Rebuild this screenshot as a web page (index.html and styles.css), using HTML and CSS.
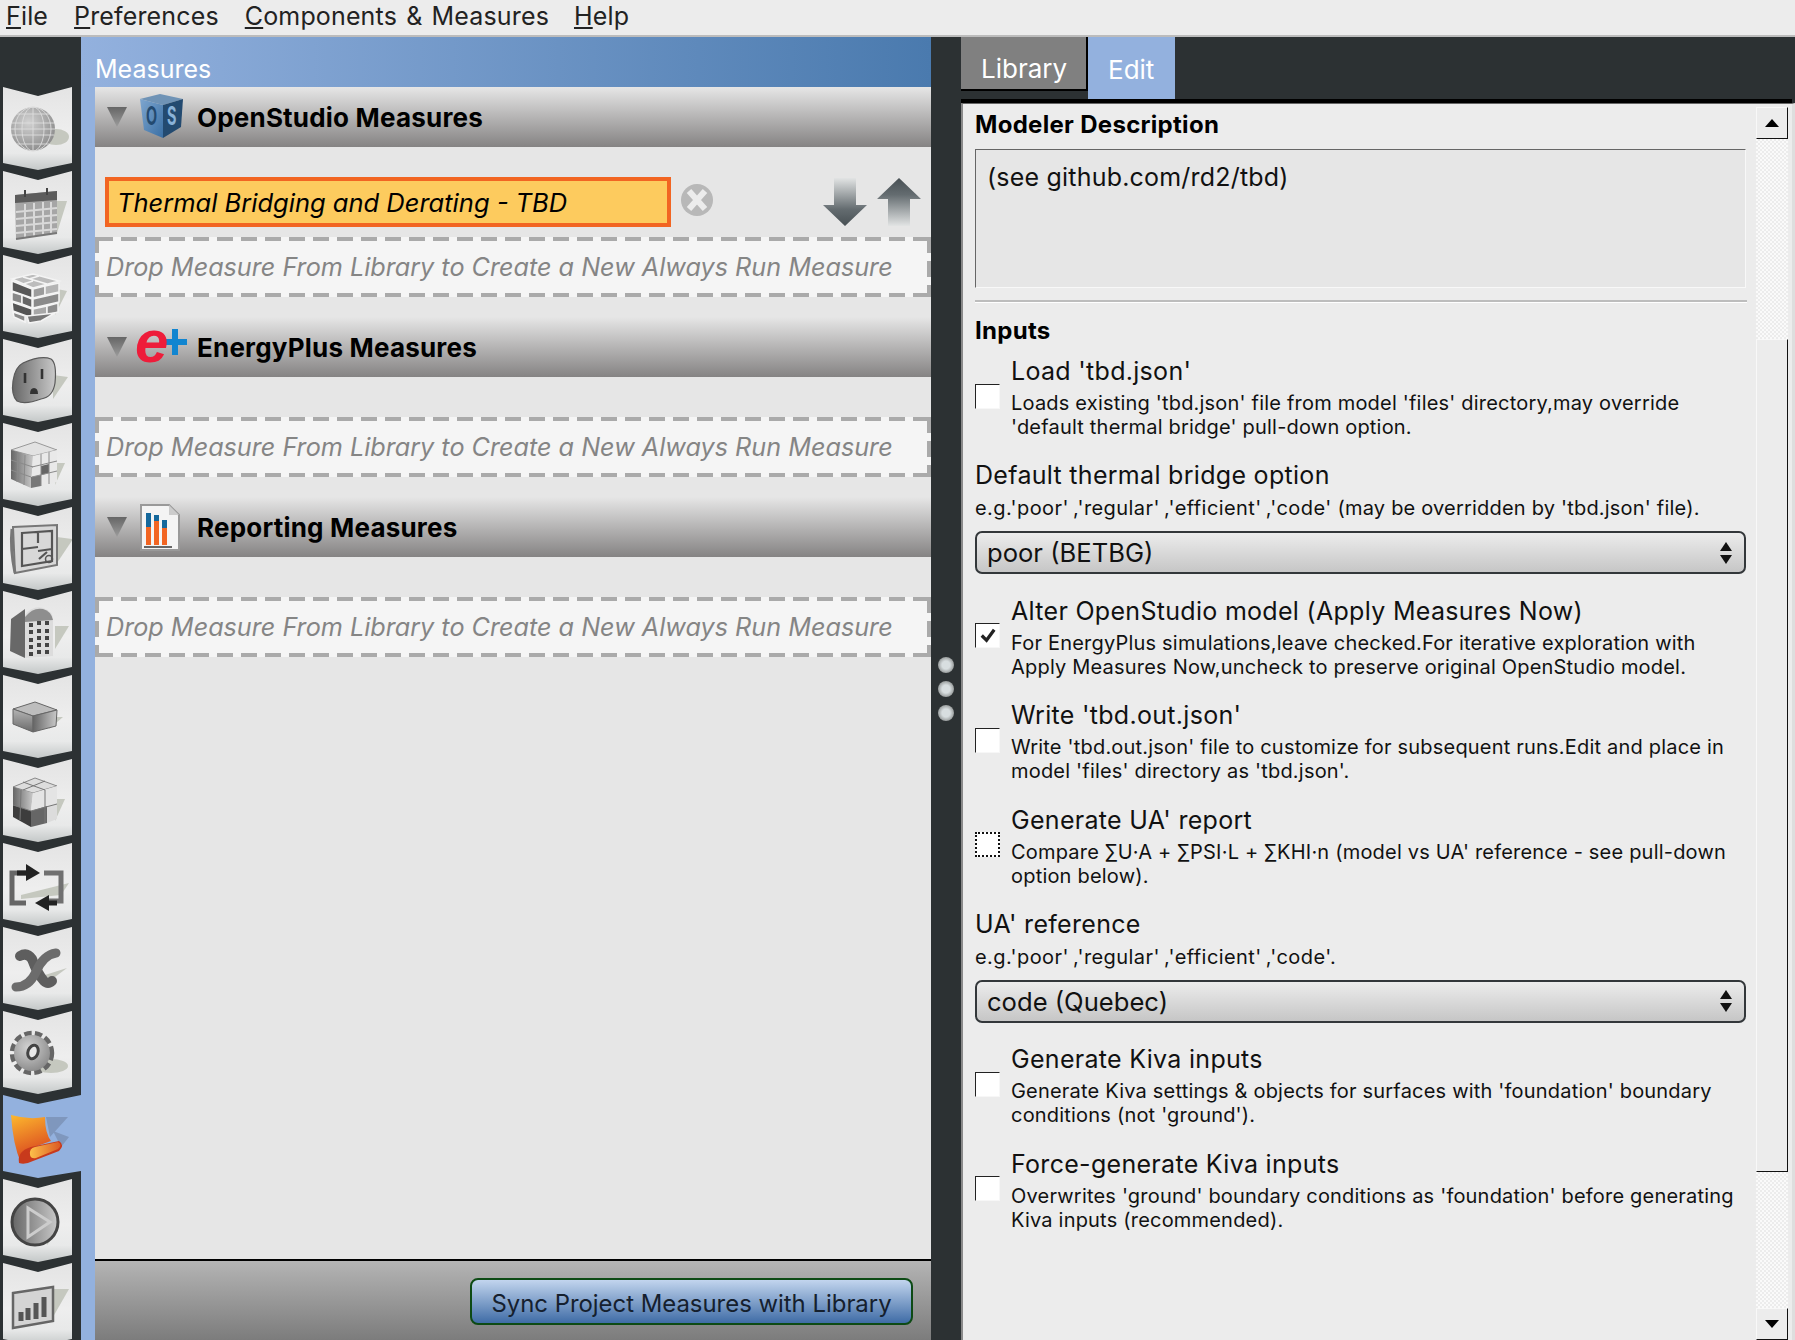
FILE: index.html
```html
<!DOCTYPE html>
<html lang="en">
<head>
    <meta charset="UTF-8">
    <title>OpenStudio Measures</title>
    <link rel="stylesheet" href="styles.css">
</head>
<body>
    <svg class="defs" width="0" height="0">
        <defs>
            <linearGradient id="gv" x1="0" y1="0" x2="0" y2="1"><stop offset="0" stop-color="#b5b5b5"/><stop offset="1" stop-color="#6b6b6b"/></linearGradient>
            <linearGradient id="gcaret" x1="0" y1="0" x2="0" y2="1"><stop offset="0" stop-color="#666"/><stop offset="1" stop-color="#9c9c9c"/></linearGradient>
            <linearGradient id="gh" x1="0" y1="0" x2="1" y2="0"><stop offset="0" stop-color="#666"/><stop offset="1" stop-color="#c9c9c9"/></linearGradient>
            <radialGradient id="gr" cx=".4" cy=".35" r=".75"><stop offset="0" stop-color="#d2d2d2"/><stop offset="1" stop-color="#858585"/></radialGradient>
            <linearGradient id="gorange" x1="0" y1="0" x2=".3" y2="1"><stop offset="0" stop-color="#fdb92e"/><stop offset="1" stop-color="#d8431f"/></linearGradient>
            <linearGradient id="groll" x1="0" y1="0" x2="1" y2="0"><stop offset="0" stop-color="#fcc04a"/><stop offset="1" stop-color="#dc5a24"/></linearGradient>
            <linearGradient id="gdown" x1="0" y1="0" x2="0" y2="1"><stop offset="0" stop-color="#e2e4e4"/><stop offset=".65" stop-color="#646c70"/><stop offset="1" stop-color="#485054"/></linearGradient>
            <linearGradient id="gup" x1="0" y1="1" x2="0" y2="0"><stop offset="0" stop-color="#e2e4e4"/><stop offset=".65" stop-color="#646c70"/><stop offset="1" stop-color="#485054"/></linearGradient>
            <linearGradient id="gcube" x1="0" y1="0" x2="1" y2="1"><stop offset="0" stop-color="#7ea6cf"/><stop offset="1" stop-color="#3a6fa4"/></linearGradient>
        </defs>
    </svg>

    <div class="menubar">
        <span class="menu-item m-file"><u>F</u>ile</span>
        <span class="menu-item m-prefs"><u>P</u>references</span>
        <span class="menu-item m-comp"><u>C</u>omponents &amp; Measures</span>
        <span class="menu-item m-help"><u>H</u>elp</span>
    </div>

    <div class="app">
        <div class="nav">
            <div class="nav-tab">
                <svg viewBox="0 0 69 83"><ellipse cx="53" cy="50" rx="13" ry="8" fill="#c5c8bf"/><circle cx="30" cy="42" r="22" fill="url(#gr)"/><g fill="none" stroke="#dedede" stroke-width=".9"><ellipse cx="30" cy="42" rx="11" ry="22"/><ellipse cx="30" cy="42" rx="18" ry="22"/><path d="M30 20v44M9 36h42M9 48h42M14 27h32M14 57h32M8 42h44"/></g></svg>
            </div>
            <div class="nav-tab">
                <svg viewBox="0 0 69 83"><polygon points="54,30 64,30 54,62" fill="#c5c8bf"/><polygon points="12,24 54,20 54,62 13,68" fill="#a6a6a6"/><polygon points="12,24 54,20 54,29 12,32" fill="#5c5c5c"/><g stroke="#d9d9d9" stroke-width="2"><path d="M13 41l41-4M13 48l41-4M13 55l41-4M13 62l41-4M22 33v34M31 32v34M40 31v33M48 31v32"/></g><path d="M22 19v7M44 17v7" stroke="#444" stroke-width="2"/><path d="M13 68l41-6" stroke="#777" stroke-width="2"/></svg>
            </div>
            <div class="nav-tab">
                <svg viewBox="0 0 69 83"><polygon points="54,34 64,36 52,60" fill="#c5c8bf"/><g stroke="#f4f4f4" stroke-width="1.5"><polygon points="9,24 30,19 56,26 30,33" fill="#bcbcbc"/><path d="M20 22l24 7M30 26l-10 3M36 21l-10 3" fill="none"/><polygon points="9,26 29,34 29,43 9,36" fill="#585858"/><polygon points="9,37 19,40 19,49 9,46" fill="#888"/><polygon points="19,40 29,44 29,53 19,49" fill="#666"/><polygon points="9,47 29,54 29,63 10,56" fill="#555"/><polygon points="10,57 22,61 22,67 11,62" fill="#8a8a8a"/><polygon points="30,34 42,31 42,40 30,43" fill="#9c9c9c"/><polygon points="42,31 56,28 56,37 42,40" fill="#b4b4b4"/><polygon points="30,44 56,38 56,47 30,53" fill="#8a8a8a"/><polygon points="30,54 44,51 44,60 30,63" fill="#a8a8a8"/><polygon points="44,51 55,48 55,57 44,60" fill="#8c8c8c"/><polygon points="24,61 52,58 38,66 26,68" fill="#777"/></g></svg>
            </div>
            <div class="nav-tab">
                <svg viewBox="0 0 69 83"><polygon points="50,36 65,38 50,60" fill="#c5c8bf"/><path d="M20 24 Q38 16 48 20 Q54 24 52 44 Q50 58 38 60 Q22 66 14 62 Q8 56 10 42 Q12 28 20 24Z" fill="url(#gh)" stroke="#5a5a5a" stroke-width="1.2"/><path d="M22 34v10M39 30v10" stroke="#333" stroke-width="2.6"/><path d="M27 55q0-6 4-6t4 6z" fill="#333"/></svg>
            </div>
            <div class="nav-tab">
                <svg viewBox="0 0 69 83"><polygon points="54,40 62,40 52,62" fill="#c5c8bf"/><polygon points="8,27 32,19 54,27 30,33" fill="#e2e2e2" stroke="#999"/><polygon points="8,27 30,33 28,65 8,56" fill="url(#gh)"/><polygon points="30,33 54,27 54,59 28,65" fill="#e9e9e9"/><polygon points="38,43 46,41 46,50 38,52" fill="#666"/><polygon points="28,54 38,52 38,63 28,65" fill="#777"/><g fill="none" stroke="#8a8a8a"><path d="M15 30l-1 29M22 32l-1 30M8 37l22 7M8 47l20 7M38 31v32M46 29v32M29 44l25-6M29 54l25-6"/></g></svg>
            </div>
            <div class="nav-tab">
                <svg viewBox="0 0 69 83"><polygon points="54,30 70,32 54,56" fill="#c5c8bf"/><polygon points="10,20 54,18 54,58 12,66" fill="#d8d8d8" stroke="#777" stroke-width="2"/><path d="M9 22q-2 20 3 44" fill="none" stroke="#777" stroke-width="3"/><path d="M19 26l30-2v30l-30 5zM19 42l16-2M35 26v10M35 44l14-2M36 52l8-7" fill="none" stroke="#555" stroke-width="2.2"/><circle cx="46" cy="52" r="3.5" fill="none" stroke="#555" stroke-width="1.5"/></svg>
            </div>
            <div class="nav-tab">
                <svg viewBox="0 0 69 83"><polygon points="52,35 66,35 52,58" fill="#c5c8bf"/><polygon points="8,28 22,18 22,67 7,60" fill="#686868"/><path d="M22 67V24q8-10 18-7 10 3 10 12v36z" fill="#dcdcdc"/><path d="M22 26q8-10 18-8 8 2 10 11l-28 2z" fill="#8e8e8e"/><g fill="#444"><rect x="26" y="32" width="4" height="4"/><rect x="34" y="30" width="4" height="4"/><rect x="42" y="30" width="4" height="4"/><rect x="26" y="39" width="4" height="4"/><rect x="34" y="38" width="4" height="4"/><rect x="42" y="38" width="4" height="4"/><rect x="26" y="47" width="4" height="4"/><rect x="34" y="45" width="4" height="4"/><rect x="42" y="45" width="4" height="4"/><rect x="26" y="54" width="4" height="4"/><rect x="34" y="52" width="4" height="4"/><rect x="42" y="52" width="4" height="4"/><rect x="26" y="61" width="4" height="4"/><rect x="34" y="59" width="4" height="4"/><rect x="42" y="59" width="4" height="4"/></g></svg>
            </div>
            <div class="nav-tab">
                <svg viewBox="0 0 69 83"><polygon points="50,42 60,42 46,54" fill="#c5c8bf"/><polygon points="10,34 32,27 54,35 30,41" fill="#bdbdbd" stroke="#666"/><polygon points="10,34 30,41 30,57 10,49" fill="url(#gv)" stroke="#666"/><polygon points="30,41 54,35 53,51 30,57" fill="url(#gh)" stroke="#666"/></svg>
            </div>
            <div class="nav-tab">
                <svg viewBox="0 0 69 83"><polygon points="52,40 62,40 52,62" fill="#c5c8bf"/><polygon points="10,28 32,19 54,27 30,34" fill="#ddd" stroke="#888"/><polygon points="10,28 30,34 28,52 10,46" fill="url(#gh)"/><polygon points="30,34 54,27 54,45 28,52" fill="#e4e4e4"/><polygon points="10,46 28,52 28,68 10,58" fill="#3d3d3d"/><polygon points="28,52 44,47 44,64 28,68" fill="#666"/><polygon points="44,47 54,45 54,60 44,64" fill="#dcdcdc"/><g fill="none" stroke="#777"><path d="M20 23l22 8M42 22L20 31M18 31l-1 30M42 31v33M10 46l18 6 26-7"/></g></svg>
            </div>
            <div class="nav-tab">
                <svg viewBox="0 0 69 83"><polygon points="18,52 66,40 58,52 18,56" fill="#c5c8bf"/><path d="M28 30H9v30h14" fill="none" stroke="#666" stroke-width="5"/><path d="M41 30h17v28H42" fill="none" stroke="#707070" stroke-width="5"/><polygon points="23,21 37,30 23,38" fill="#222"/><path d="M14 30h12" stroke="#222" stroke-width="5"/><polygon points="32,60 46,52 46,68" fill="#222"/><path d="M44 60h10" stroke="#222" stroke-width="5"/></svg>
            </div>
            <div class="nav-tab">
                <svg viewBox="0 0 69 83"><path d="M42 48l22-7-16 12z" fill="#c5c8bf"/><path d="M17 29q7-4 12 3 5 14 12 22 4 4 8 0" fill="none" stroke="#5e5e5e" stroke-width="10" stroke-linecap="round"/><path d="M13 60q13 0 20-15 7-17 20-19" fill="none" stroke="#6c6c6c" stroke-width="9" stroke-linecap="round"/></svg>
            </div>
            <div class="nav-tab">
                <svg viewBox="0 0 69 83"><ellipse cx="48" cy="55" rx="17" ry="7" fill="#c5c8bf"/><circle cx="29" cy="42" r="19" fill="none" stroke="#666" stroke-width="6.5" stroke-dasharray="7 3.2"/><circle cx="29" cy="42" r="18" fill="url(#gr)"/><ellipse cx="30" cy="41" rx="5" ry="7" transform="rotate(20 30 41)" fill="#e8e8e8" stroke="#444" stroke-width="3"/></svg>
            </div>
            <div class="nav-tab active">
                <svg viewBox="0 0 78 83"><path d="M43 22h22L47 42zM50 36l16 6-8 10z" fill="#7f97bd"/><path d="M8 20Q26 25 42 22Q42 38 48 46L26 54Q18 58 18 68Q10 50 8 20Z" fill="url(#gorange)"/><path d="M16 68Q14 56 28 52L56 46Q62 50 56 56L30 66Q22 70 16 68Z" fill="#c83a1c"/><path d="M27 60Q26 53 32 52L55 47Q60 50 55 54L33 63Q28 64 27 60Z" fill="url(#groll)"/></svg>
            </div>
            <div class="nav-tab">
                <svg viewBox="0 0 69 83"><path d="M40 20 Q66 40 44 66" fill="#bfc3b9"/><circle cx="32" cy="43" r="23" fill="url(#gh)" stroke="#444" stroke-width="3"/><polygon points="25,29 47,43 25,58" fill="none" stroke="#ccc" stroke-width="3"/></svg>
            </div>
            <div class="nav-tab">
                <svg viewBox="0 0 69 83"><polygon points="50,26 66,26 50,54" fill="#c5c8bf"/><polygon points="10,30 50,24 50,58 10,65" fill="#d4d4d4" stroke="#666" stroke-width="2.5"/><path d="M18 58v-9M25 57V45M33 56V40M41 54V34" stroke="#555" stroke-width="5"/></svg>
            </div>
        </div>

        <div class="measures">
            <div class="measures-title">Measures</div>
            <div class="measures-body">
                <div class="section-head">
                    <svg class="caret" viewBox="0 0 20 20"><polygon points="0,0 20,0 10,20" fill="url(#gcaret)"/></svg>
                    <svg class="section-icon" viewBox="0 0 52 46"><polygon points="5,5 25,0 48,5 28,11" fill="#6f93b6"/><polygon points="5,5 28,11 28,44 9,36" fill="url(#gcube)"/><polygon points="28,11 48,5 46,33 28,44" fill="#234a70"/><text transform="translate(11 31) scale(.72 1.25)" class="cube-letter" fill="#234a70">O</text><text transform="translate(32 31) scale(.72 1.25)" class="cube-letter" fill="#8ab2d8">S</text></svg>
                    <span class="section-name">OpenStudio Measures</span>
                </div>
                <div class="section-list">
                    <div class="measure-row">
                        <div class="measure-item">Thermal Bridging and Derating - TBD</div>
                        <svg class="remove-icon" viewBox="0 0 32 32"><circle cx="16" cy="16" r="16" fill="#b8b8b8"/><path d="M8 7l16 18M24 7L8 25" stroke="#ececec" stroke-width="6"/></svg>
                        <div class="move-icons">
                            <svg class="arrow" viewBox="0 0 44 48"><polygon points="11,0 33,0 33,27 44,27 22,48 0,27 11,27" fill="url(#gdown)"/></svg>
                            <svg class="arrow" viewBox="0 0 44 48"><polygon points="11,48 33,48 33,21 44,21 22,0 0,21 11,21" fill="url(#gup)"/></svg>
                        </div>
                    </div>
                    <div class="drop-zone">Drop Measure From Library to Create a New Always Run Measure</div>
                </div>

                <div class="section-head">
                    <svg class="caret" viewBox="0 0 20 20"><polygon points="0,0 20,0 10,20" fill="url(#gcaret)"/></svg>
                    <svg class="section-icon" viewBox="0 0 52 46"><path d="M31 15h6V5h6v10h9v6h-9v10h-6V21h-6z" fill="#1185d0"/><text x="0" y="38" class="eplus-e">e</text></svg>
                    <span class="section-name">EnergyPlus Measures</span>
                </div>
                <div class="section-list empty">
                    <div class="drop-zone">Drop Measure From Library to Create a New Always Run Measure</div>
                </div>

                <div class="section-head">
                    <svg class="caret" viewBox="0 0 20 20"><polygon points="0,0 20,0 10,20" fill="url(#gcaret)"/></svg>
                    <svg class="section-icon" viewBox="0 0 52 46"><polygon points="6,1 34,1 44,11 44,46 6,46" fill="#f4f4f4" stroke="#999" stroke-width="2"/><polygon points="34,1 44,11 34,11" fill="#ccc"/><rect x="11" y="9" width="5" height="14" fill="#15689c"/><rect x="11" y="23" width="5" height="18" fill="#f26522"/><rect x="19" y="11" width="5" height="6" fill="#15689c"/><rect x="19" y="17" width="5" height="24" fill="#f26522"/><rect x="27" y="16" width="5" height="8" fill="#15689c"/><rect x="27" y="24" width="5" height="17" fill="#f26522"/><path d="M9 43h28" stroke="#666" stroke-width="2"/></svg>
                    <span class="section-name">Reporting Measures</span>
                </div>
                <div class="section-list empty">
                    <div class="drop-zone">Drop Measure From Library to Create a New Always Run Measure</div>
                </div>

                <div class="sync-bar">
                    <button class="sync-btn">Sync Project Measures with Library</button>
                </div>
            </div>
        </div>

        <div class="splitter">
            <span class="split-dot"></span>
            <span class="split-dot"></span>
            <span class="split-dot"></span>
        </div>

        <div class="side">
            <div class="tabs">
                <div class="tab tab-library">Library</div>
                <div class="tab tab-edit">Edit</div>
            </div>
            <div class="edit-panel">
                <div class="edit-content">
                    <div class="strong-label">Modeler Description</div>
                    <div class="description-box">(see github.com/rd2/tbd)</div>
                    <div class="divider"></div>
                    <div class="strong-label inputs-label">Inputs</div>

                    <div class="check-row first">
                        <span class="checkbox"></span>
                        <div class="check-text">
                            <div class="field-label">Load 'tbd.json'</div>
                            <div class="field-desc">Loads existing 'tbd.json' file from model 'files' directory,may override<br>'default thermal bridge' pull-down option.</div>
                        </div>
                    </div>

                    <div class="choice-field">
                        <div class="field-label">Default thermal bridge option</div>
                        <div class="field-desc"><span class="quoted">e.g.'poor'&thinsp;,'regular'&thinsp;,'efficient'&thinsp;,'code'</span> (may be overridden by 'tbd.json' file).</div>
                        <div class="select-box"><span>poor (BETBG)</span><svg class="select-arrows" viewBox="0 0 12 24"><polygon points="6,1 12,10 0,10" fill="#111"/><polygon points="6,23 12,14 0,14" fill="#111"/></svg></div>
                    </div>

                    <div class="check-row">
                        <span class="checkbox"><svg viewBox="0 0 24 24"><path d="M6 12l5 5 8-11" fill="none" stroke="#222" stroke-width="3.4"/></svg></span>
                        <div class="check-text">
                            <div class="field-label">Alter OpenStudio model (Apply Measures Now)</div>
                            <div class="field-desc">For EnergyPlus simulations,leave checked.For iterative exploration with<br>Apply Measures Now,uncheck to preserve original OpenStudio model.</div>
                        </div>
                    </div>

                    <div class="check-row">
                        <span class="checkbox"></span>
                        <div class="check-text">
                            <div class="field-label">Write 'tbd.out.json'</div>
                            <div class="field-desc">Write 'tbd.out.json' file to customize for subsequent runs.Edit and place in<br>model 'files' directory as 'tbd.json'.</div>
                        </div>
                    </div>

                    <div class="check-row">
                        <span class="checkbox focused"></span>
                        <div class="check-text">
                            <div class="field-label">Generate UA' report</div>
                            <div class="field-desc">Compare ∑U·A + ∑PSI·L + ∑KHI·n (model vs UA' reference - see pull-down<br>option below).</div>
                        </div>
                    </div>

                    <div class="choice-field">
                        <div class="field-label">UA' reference</div>
                        <div class="field-desc"><span class="quoted">e.g.'poor'&thinsp;,'regular'&thinsp;,'efficient'&thinsp;,'code'.</span></div>
                        <div class="select-box"><span>code (Quebec)</span><svg class="select-arrows" viewBox="0 0 12 24"><polygon points="6,1 12,10 0,10" fill="#111"/><polygon points="6,23 12,14 0,14" fill="#111"/></svg></div>
                    </div>

                    <div class="check-row">
                        <span class="checkbox"></span>
                        <div class="check-text">
                            <div class="field-label">Generate Kiva inputs</div>
                            <div class="field-desc">Generate Kiva settings &amp; objects for surfaces with 'foundation' boundary<br>conditions (not 'ground').</div>
                        </div>
                    </div>

                    <div class="check-row">
                        <span class="checkbox"></span>
                        <div class="check-text">
                            <div class="field-label">Force-generate Kiva inputs</div>
                            <div class="field-desc">Overwrites 'ground' boundary conditions as 'foundation' before generating<br>Kiva inputs (recommended).</div>
                        </div>
                    </div>
                </div>

                <div class="scrollbar">
                    <div class="scroll-btn"><svg viewBox="0 0 14 8"><polygon points="7,0 14,8 0,8" fill="#000"/></svg></div>
                    <div class="scroll-track top"></div>
                    <div class="scroll-thumb"></div>
                    <div class="scroll-track"></div>
                    <div class="scroll-btn"><svg viewBox="0 0 14 8"><polygon points="0,0 14,0 7,8" fill="#000"/></svg></div>
                </div>
            </div>
        </div>
    </div>
</body>
</html>
```

FILE: styles.css
```css
html, body {
    height: 100%;
    overflow: hidden;
}
body {
    margin: 0;
    font-family: 'Inter', 'Liberation Sans', sans-serif;
    background: #2c3133;
    color: #111;
    display: flex;
    flex-direction: column;
}
.defs {
    display: block;
    flex: none;
}
.menubar {
    height: 35px;
    flex: none;
    display: flex;
    background: #ececec;
    border-bottom: 2px solid #bcbcbc;
    font-size: 25px;
    line-height: 33px;
    letter-spacing: .15px;
    word-spacing: 2px;
    color: #222;
}
.menu-item {
    margin-left: 6px;
}
.m-prefs {
    margin-left: 26px;
}
.m-comp {
    margin-left: 26px;
}
.m-help {
    margin-left: 25px;
}
.app {
    flex: 1;
    display: flex;
    min-height: 0;
}

/* left navigation */
.nav {
    width: 81px;
    flex: none;
    padding-top: 50px;
    display: flex;
    flex-direction: column;
    gap: 1px;
    overflow: hidden;
}
.nav-tab {
    width: 69px;
    height: 83px;
    flex: none;
    margin-left: 3px;
    background: linear-gradient(#e4e4e4, #eeeeee 55%, #e8e9e9 80%, #c4c8c8);
    clip-path: polygon(0 0, 35px 9px, 100% 0, 100% 76px, 35px 83px, 0 76px);
}
.nav-tab svg {
    display: block;
    width: 100%;
    height: 100%;
}
.nav-tab.active {
    width: 78px;
    background: #93b1de;
}

/* measures column */
.measures {
    width: 850px;
    flex: none;
    display: flex;
    flex-direction: column;
    background: #93b1de;
}
.measures-title {
    height: 50px;
    flex: none;
    padding: 16px 0 0 14px;
    box-sizing: border-box;
    font-size: 25px;
    line-height: 32px;
    color: #fff;
    background: linear-gradient(90deg, #93b1de, #4a7aae);
}
.measures-body {
    flex: 1;
    margin-left: 14px;
    background: #e6e6e6;
    display: flex;
    flex-direction: column;
}
.section-head {
    height: 60px;
    flex: none;
    display: flex;
    align-items: center;
    padding-left: 12px;
    background: linear-gradient(#e6e6e6, #858383);
}
.caret {
    width: 20px;
    height: 20px;
}
.section-icon {
    width: 52px;
    height: 46px;
    margin: 0 10px 0 8px;
    overflow: visible;
}
.section-name {
    font-size: 26px;
    font-weight: 700;
    letter-spacing: .2px;
    color: #000;
}
.cube-letter {
    font-size: 20px;
    font-weight: 700;
    font-family: 'Inter', sans-serif;
}
.eplus-e {
    font-family: 'Liberation Sans', sans-serif;
    font-size: 60px;
    font-weight: 700;
    font-style: italic;
    fill: #ee1c3a;
}
.section-list {
    padding: 30px 0 20px;
    flex: none;
}
.section-list.empty {
    padding-top: 40px;
}
.measure-row {
    display: flex;
    align-items: center;
    margin-bottom: 10px;
    padding: 0 10px;
}
.measure-item {
    width: 566px;
    height: 50px;
    box-sizing: border-box;
    border: 4px solid #f26522;
    background: #fdcb5e;
    padding-left: 8px;
    font-size: 25.5px;
    line-height: 44px;
    font-style: italic;
    color: #000;
}
.remove-icon {
    width: 32px;
    height: 32px;
    margin-left: 10px;
    margin-top: -4px;
}
.move-icons {
    margin-left: auto;
    display: flex;
    gap: 10px;
}
.arrow {
    width: 44px;
    height: 48px;
    display: block;
}
.drop-zone {
    height: 60px;
    box-sizing: border-box;
    padding-left: 11px;
    font-size: 25.2px;
    line-height: 60px;
    font-style: italic;
    color: #858585;
    background:
        repeating-linear-gradient(90deg, #aaa 0 16px, transparent 16px 24px) 2px 0 / 100% 4px no-repeat,
        repeating-linear-gradient(90deg, #aaa 0 16px, transparent 16px 24px) 2px 100% / 100% 4px no-repeat,
        repeating-linear-gradient(#aaa 0 16px, transparent 16px 24px) 0 0 / 4px 100% no-repeat,
        repeating-linear-gradient(#aaa 0 16px, transparent 16px 24px) 100% 0 / 4px 100% no-repeat,
        #f5f5f5;
}
.sync-bar {
    margin-top: auto;
    height: 81px;
    flex: none;
    box-sizing: border-box;
    border-top: 2px solid #000;
    background: linear-gradient(#b4b4b4, #7c7c7c);
    display: flex;
    justify-content: flex-end;
    align-items: flex-start;
    padding: 17px 18px 0 0;
}
.sync-btn {
    width: 443px;
    height: 47px;
    border: 2px solid #0d4a14;
    border-radius: 8px;
    background: linear-gradient(#c2d5ee, #3f6ca6);
    font-family: inherit;
    font-size: 23.9px;
    color: #15202e;
    padding: 3px 0 0;
}

/* splitter */
.splitter {
    width: 30px;
    flex: none;
    display: flex;
    flex-direction: column;
    align-items: center;
    gap: 8px;
    padding-top: 620px;
    box-sizing: border-box;
}
.split-dot {
    width: 16px;
    height: 16px;
    border-radius: 50%;
    background: radial-gradient(#d8dee0 35%, #9a9e9e 70%, #2c3133 100%);
}

/* right side */
.side {
    flex: 1;
    display: flex;
    flex-direction: column;
    min-width: 0;
}
.tabs {
    height: 62px;
    flex: none;
    display: flex;
    align-items: flex-start;
    border-bottom: 4px solid #000;
    margin-right: 3px;
}
.tab {
    font-size: 26px;
    color: #fff;
    box-sizing: border-box;
}
.tab-library {
    width: 127px;
    height: 54px;
    background: #808080;
    border-right: 2px solid #000;
    border-bottom: 2px solid #000;
    padding: 16px 0 0 20px;
    line-height: 32px;
}
.tab-edit {
    width: 87px;
    height: 62px;
    background: #93b1de;
    padding: 17px 0 0 20px;
    line-height: 32px;
}
.edit-panel {
    flex: 1;
    display: flex;
    min-height: 0;
    background: #ececec;
    border-left: 2px solid #8a8a8a;
    border-top: 1px solid #666;
    border-right: 3px solid #dedede;
}
.edit-content {
    width: 772px;
    flex: none;
    margin-left: 12px;
    padding-top: 5px;
}
.strong-label {
    font-size: 24px;
    line-height: 32px;
    font-weight: 700;
    letter-spacing: .3px;
    color: #000;
}
.description-box {
    margin-top: 8px;
    width: 771px;
    height: 139px;
    box-sizing: border-box;
    background: #e6e6e6;
    border: 1px solid;
    border-color: #666 #f8f8f8 #f8f8f8 #666;
    padding: 11px 11px;
    font-size: 25px;
    line-height: 32px;
    letter-spacing: .2px;
}
.divider {
    margin-top: 12px;
    height: 3px;
    background: linear-gradient(#bdbdbd 50%, #fff 50%);
}
.inputs-label {
    margin-top: 12px;
}
.check-row {
    display: flex;
    align-items: center;
    margin-top: 20.6px;
}
.check-row.first {
    margin-top: 8px;
}
.checkbox {
    width: 25px;
    height: 25px;
    flex: none;
    box-sizing: border-box;
    background: #fff;
    border: 1px solid;
    border-color: #222 #f7f7f7 #f7f7f7 #222;
    margin-right: 11px;
    margin-top: -2px;
}
.checkbox svg {
    display: block;
    width: 100%;
    height: 100%;
}
.checkbox.focused {
    border: 2px dotted #111;
}
.field-label {
    font-size: 25px;
    line-height: 32px;
    letter-spacing: .3px;
    color: #111;
}
.field-desc {
    margin-top: 4px;
    font-size: 20px;
    line-height: 24px;
    letter-spacing: .2px;
    color: #111;
}
.quoted {
    letter-spacing: .43px;
}
.choice-field {
    margin-top: 20px;
    margin-bottom: 3px;
}
.choice-field .field-desc {
    margin-top: 5px;
}
.select-box {
    margin-top: 11px;
    width: 771px;
    height: 43px;
    box-sizing: border-box;
    border: 2px solid #33373a;
    border-radius: 7px;
    background: linear-gradient(#ececec, #c6c6c6);
    display: flex;
    align-items: center;
    justify-content: space-between;
    padding: 0 12px 0 10px;
    font-size: 25.6px;
}
.select-arrows {
    width: 12px;
    height: 24px;
}
.scrollbar {
    width: 32px;
    flex: none;
    margin-left: 9px;
    margin-top: 3px;
    display: flex;
    flex-direction: column;
}
.scroll-btn, .scroll-thumb {
    box-sizing: border-box;
    background: #ececec;
    border: 1px solid;
    border-color: #f8f8f8 #111 #111 #f8f8f8;
}
.scroll-btn {
    height: 32px;
    flex: none;
    display: flex;
    align-items: center;
    justify-content: center;
}
.scroll-btn svg {
    width: 14px;
    height: 8px;
}
.scroll-thumb {
    height: 833px;
    flex: none;
}
.scroll-track {
    flex: 1;
    background: repeating-conic-gradient(#ececec 0 25%, #fafafa 0 50%) 0 0 / 4px 4px;
}
.scroll-track.top {
    flex: none;
    height: 200px;
}
```
